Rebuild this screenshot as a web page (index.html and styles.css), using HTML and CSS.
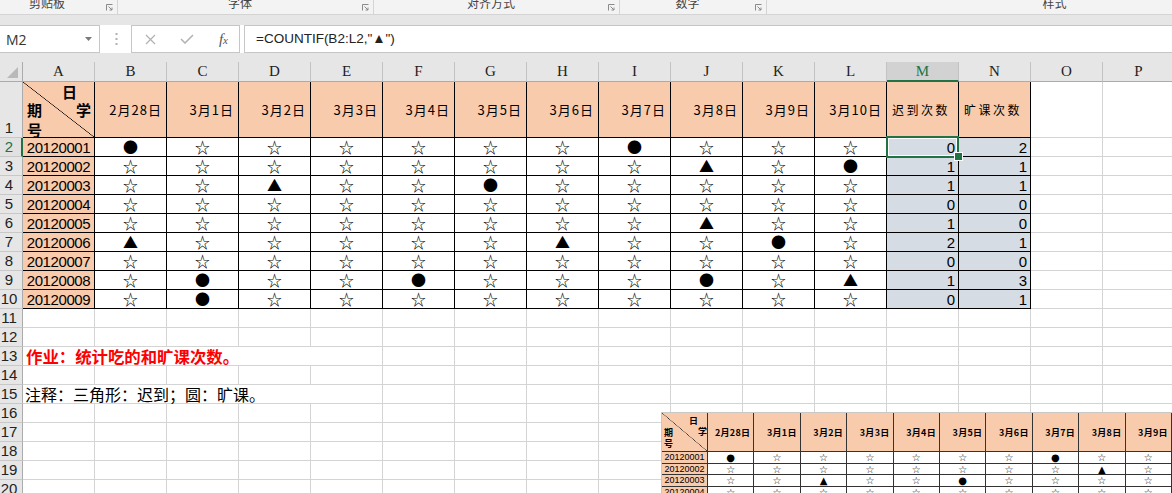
FILE: index.html
```html
<!DOCTYPE html>
<html lang="zh-CN">

<head>
    <meta charset="UTF-8">
    <meta name="viewport" content="width=device-width, initial-scale=1.0">
    <title>考勤统计</title>
    <link rel="stylesheet" href="styles.css">
</head>

<body>
    <!-- 功能区分组标题 -->
    <div class="ribbon">
        <div class="group g1"><span class="group-label">剪贴板</span><span class="launcher"><svg width="7" height="7" viewBox="0 0 7 7"><path d="M0.5 6.5V0.5H6.5" fill="none" stroke="#8a8a8a"/><path d="M2.5 2.5L6 6M6 3.5V6H3.5" fill="none" stroke="#8a8a8a"/></svg></span></div>
        <div class="group g2"><span class="group-label">字体</span><span class="launcher"><svg width="7" height="7" viewBox="0 0 7 7"><path d="M0.5 6.5V0.5H6.5" fill="none" stroke="#8a8a8a"/><path d="M2.5 2.5L6 6M6 3.5V6H3.5" fill="none" stroke="#8a8a8a"/></svg></span></div>
        <div class="group g3"><span class="group-label">对齐方式</span><span class="launcher"><svg width="7" height="7" viewBox="0 0 7 7"><path d="M0.5 6.5V0.5H6.5" fill="none" stroke="#8a8a8a"/><path d="M2.5 2.5L6 6M6 3.5V6H3.5" fill="none" stroke="#8a8a8a"/></svg></span></div>
        <div class="group g4"><span class="group-label">数字</span><span class="launcher"><svg width="7" height="7" viewBox="0 0 7 7"><path d="M0.5 6.5V0.5H6.5" fill="none" stroke="#8a8a8a"/><path d="M2.5 2.5L6 6M6 3.5V6H3.5" fill="none" stroke="#8a8a8a"/></svg></span></div>
        <div class="group g5"><span class="group-label">样式</span></div>
    </div>
    <div class="band"></div>

    <!-- 编辑栏 -->
    <div class="formula-bar">
        <div class="name-box">
            <span>M2</span>
            <svg class="drop" width="7" height="4" viewBox="0 0 7 4"><path d="M0 0H7L3.5 4Z" fill="#7a7a7a"/></svg>
        </div>
        <div class="grip">
            <svg width="3" height="12" viewBox="0 0 3 12"><rect x="0.5" y="0" width="2" height="2" fill="#b0b0b0"/><rect x="0.5" y="5" width="2" height="2" fill="#b0b0b0"/><rect x="0.5" y="10" width="2" height="2" fill="#b0b0b0"/></svg>
        </div>
        <div class="fx-box">
            <svg width="11" height="11" viewBox="0 0 11 11"><path d="M1 1L10 10M10 1L1 10" stroke="#b3b3b3" stroke-width="1.3"/></svg>
            <svg width="14" height="10" viewBox="0 0 14 10"><path d="M1 5L5 9L13 1" fill="none" stroke="#b3b3b3" stroke-width="1.6"/></svg>
            <span class="fx">f<small>x</small></span>
        </div>
        <div class="formula-input">=COUNTIF(B2:L2,"▲")</div>
    </div>
    <div class="band low"></div>

    <!-- 工作表 -->
    <div class="sheet" id="sheet"></div>

    <!-- 粘贴的图片 -->
    <div class="picture" id="picture"></div>

    <script>
        var dates = ['2月28日', '3月1日', '3月2日', '3月3日', '3月4日', '3月5日', '3月6日', '3月7日', '3月8日', '3月9日', '3月10日'];
        var students = [
            ['20120001', '●☆☆☆☆☆☆●☆☆☆'],
            ['20120002', '☆☆☆☆☆☆☆☆▲☆●'],
            ['20120003', '☆☆▲☆☆●☆☆☆☆☆'],
            ['20120004', '☆☆☆☆☆☆☆☆☆☆☆'],
            ['20120005', '☆☆☆☆☆☆☆☆▲☆☆'],
            ['20120006', '▲☆☆☆☆☆▲☆☆●☆'],
            ['20120007', '☆☆☆☆☆☆☆☆☆☆☆'],
            ['20120008', '☆●☆☆●☆☆☆●☆▲'],
            ['20120009', '☆●☆☆☆☆☆☆☆☆☆']
        ];
        var letters = 'ABCDEFGHIJKLMNOP'.split('');
        var diag = '<span class="d1">日</span><span class="d2">学</span><span class="d3">期</span><span class="d4">号</span>';

        function add(parent, cls, html) {
            var div = document.createElement('div');
            div.className = cls;
            div.innerHTML = html === undefined ? '' : html;
            parent.appendChild(div);
            return div;
        }

        // 表格主体
        var sheet = document.getElementById('sheet');
        function cell(cls, html) {
            return add(sheet, 'cell ' + cls, html);
        }
        function blanks(n) {
            for (var i = 0; i < n; i++) cell('');
        }

        cell('corner', '<svg width="13" height="13" viewBox="0 0 13 13"><path d="M12 1V12H1Z" fill="#b9b9b9"/></svg>');
        letters.forEach(function (l) {
            cell('col-head' + (l === 'M' ? ' active' : ''), l);
        });

        cell('row-head', '1');
        cell('t peach diag', diag);
        dates.forEach(function (d) {
            cell('t peach date', d);
        });
        cell('t peach title', '迟到次数');
        cell('t peach title', '旷课次数');
        blanks(2);

        students.forEach(function (s, i) {
            var r = i + 2;
            var late = 0;
            var absent = 0;
            cell('row-head' + (r === 2 ? ' active' : ''), r);
            cell('t peach id', s[0]);
            s[1].split('').forEach(function (c) {
                if (c === '▲') late++;
                if (c === '●') absent++;
                cell('t sym', c);
            });
            // 等同 COUNTIF(B:L,"▲") / COUNTIF(B:L,"●")
            cell('t slate num' + (r === 2 ? ' selected' : ''), late);
            cell('t slate num', absent);
            blanks(2);
        });

        for (var r = 11; r <= 20; r++) {
            cell('row-head', r);
            if (r === 13) {
                cell('note red span5', '作业：统计吃的和旷课次数。');
                blanks(11);
            } else if (r === 15) {
                cell('note span5', '注释：三角形：迟到；圆：旷课。');
                blanks(11);
            } else {
                blanks(16);
            }
        }

        // 右下角的表格截图
        var pic = document.getElementById('picture');
        add(pic, 'p-cell p-peach p-diag', diag);
        dates.forEach(function (d) {
            add(pic, 'p-cell p-peach p-date', d);
        });
        students.slice(0, 4).forEach(function (s) {
            add(pic, 'p-cell p-peach p-id', s[0]);
            s[1].split('').forEach(function (c) {
                add(pic, 'p-cell p-sym', c);
            });
        });
    </script>
</body>

</html>
```

FILE: styles.css
```css
* {
    padding: 0;
    margin: 0;
    box-sizing: border-box;
}

body {
    width: 1172px;
    height: 493px;
    overflow: hidden;
    position: relative;
    background: #ffffff;
    font-family: "Liberation Sans", "Noto Sans CJK SC", sans-serif;
    color: #000000;
}

/* 功能区 */
.ribbon {
    display: flex;
    height: 15px;
    background: #f3f3f3;
    border-bottom: 1px solid #d4d4d4;
    overflow: hidden;
    font-family: "Noto Sans CJK SC", sans-serif;
    font-size: 12px;
    color: #444444;
}

.group {
    display: flex;
    flex: none;
    height: 14px;
    border-right: 1px solid #d4d4d4;
}

.g1 {
    width: 118px;
}

.g2 {
    width: 256px;
}

.g3 {
    width: 246px;
}

.g4 {
    width: 147px;
}

.g5 {
    width: 576px;
}

.g1 .group-label {
    padding-right: 12px;
}

.group-label {
    flex: 1;
    text-align: center;
    line-height: 14px;
    margin-top: -4px;
    white-space: nowrap;
}

.launcher {
    width: 11px;
    padding-top: 4px;
}

.launcher svg {
    display: block;
}

.band {
    height: 10px;
    background: #e6e6e6;
}

.band.low {
    height: 9px;
}

/* 编辑栏 */
.formula-bar {
    display: flex;
    height: 28px;
    background: #ffffff;
}

.name-box {
    display: flex;
    align-items: center;
    justify-content: space-between;
    width: 100px;
    border: 1px solid #c6c6c6;
    border-left: none;
    padding: 0 7px 0 6px;
    font-family: "Open Sans", sans-serif;
    font-size: 14px;
    color: #333333;
}

.grip {
    width: 31px;
    display: flex;
    align-items: center;
    justify-content: center;
    padding-left: 2px;
}

.grip svg {
    display: block;
}

.fx-box {
    display: flex;
    align-items: center;
    justify-content: space-between;
    width: 109px;
    border: 1px solid #c6c6c6;
    padding: 0 11px 0 13px;
}

.fx {
    font-family: "Liberation Serif", serif;
    font-style: italic;
    font-size: 15px;
    color: #555555;
}

.fx small {
    font-size: 11px;
}

.formula-input {
    flex: 1;
    margin-left: 4px;
    border: 1px solid #c6c6c6;
    border-right: none;
    padding-left: 11px;
    line-height: 26px;
    font-size: 13.5px;
    color: #222222;
}

/* 工作表 */
.sheet {
    display: grid;
    grid-template-columns: 23px repeat(16, 72px);
    grid-template-rows: 20px 56px repeat(19, 19px);
    width: 1175px;
}

.cell {
    display: flex;
    align-items: center;
    border-right: 1px solid #d4d4d4;
    border-bottom: 1px solid #d4d4d4;
    font-size: 15px;
    white-space: nowrap;
}

.corner {
    background: #e6e6e6;
    border-right-color: #ababab;
    border-bottom-color: #ababab;
    align-items: flex-end;
    justify-content: flex-end;
    padding: 0 3px 2px 0;
}

.corner svg {
    display: block;
}

.col-head {
    justify-content: center;
    background: #e6e6e6;
    border-right-color: #c3c3c3;
    border-bottom-color: #ababab;
    font-family: "Liberation Serif", serif;
    font-size: 15px;
    color: #222222;
}

.col-head.active {
    background: #d2d2d2;
    color: #217346;
    border-bottom: 2px solid #217346;
}

.row-head {
    justify-content: center;
    align-items: flex-end;
    background: #e6e6e6;
    border-right-color: #ababab;
    border-bottom-color: #c8c8c8;
    padding-right: 4px;
    font-size: 15px;
    line-height: 18px;
    color: #222222;
}

.row-head.active {
    color: #217346;
    background: #e1e1e1;
    border-right: 2px solid #217346;
    padding-right: 3px;
}

.t {
    border-right-color: #000000;
    border-bottom-color: #000000;
}

.peach {
    background: #f8cbad;
}

.slate {
    background: #d6dce4;
}

.diag {
    position: relative;
    background-color: #f8cbad;
    background-image: linear-gradient(to top right, transparent calc(50% - 0.6px), #000000 50%, transparent calc(50% + 0.6px));
}

.diag span {
    position: absolute;
    font-family: "Noto Sans CJK SC", sans-serif;
    font-weight: bold;
    font-size: 15px;
    line-height: 15px;
}

.diag .d1 {
    left: 39px;
    top: 2px;
}

.diag .d2 {
    left: 53px;
    top: 20px;
}

.diag .d3 {
    left: 4px;
    top: 20px;
}

.diag .d4 {
    left: 4px;
    top: 40px;
}

.date {
    justify-content: flex-end;
    padding-right: 4px;
    font-family: "Noto Sans CJK SC", sans-serif;
    font-size: 13px;
    letter-spacing: 1px;
}

.title {
    padding-left: 5px;
    font-family: "Noto Sans CJK SC", sans-serif;
    font-size: 12px;
    letter-spacing: 2.5px;
}

.id {
    justify-content: center;
    letter-spacing: -0.4px;
}

.sym {
    justify-content: center;
    font-family: "Noto Sans CJK SC", sans-serif;
    font-size: 15px;
    line-height: 18px;
}

.num {
    justify-content: flex-end;
    padding-right: 3px;
}

.selected {
    position: relative;
    z-index: 2;
}

.selected::after {
    content: "";
    position: absolute;
    left: -1px;
    top: -2px;
    right: -1px;
    bottom: -2px;
    border: 2px solid #217346;
    box-shadow: inset 0 0 0 1px #ffffff;
}

.selected::before {
    content: "";
    position: absolute;
    right: -5px;
    bottom: -5px;
    width: 7px;
    height: 7px;
    background: #217346;
    border: 1px solid #ffffff;
    z-index: 3;
}

.span5 {
    grid-column: span 5;
}

.note {
    padding-left: 2px;
    font-family: "Noto Sans CJK SC", sans-serif;
    font-size: 16px;
}

.note.red {
    padding-left: 3px;
    color: #ff0000;
    font-weight: bold;
    font-size: 16.4px;
}

/* 图片 */
.picture {
    position: absolute;
    left: 661px;
    top: 412px;
    display: grid;
    grid-template-columns: 46px repeat(11, 46.4px);
    grid-template-rows: 39px repeat(4, 11.7px);
    background: #ffffff;
    border-top: 1px solid #c8c8c8;
    border-left: 1px solid #c8c8c8;
    font-size: 9px;
}

.p-cell {
    display: flex;
    align-items: center;
    justify-content: center;
    border-right: 1px solid #333333;
    border-bottom: 1px solid #333333;
    white-space: nowrap;
    overflow: hidden;
}

.p-peach {
    background: #f8cbad;
}

.p-diag {
    position: relative;
    background-image: linear-gradient(to top right, transparent calc(50% - 0.5px), #333333 50%, transparent calc(50% + 0.5px));
}

.p-diag span {
    position: absolute;
    font-family: "Noto Sans CJK SC", sans-serif;
    font-weight: bold;
    font-size: 9px;
    line-height: 9px;
}

.p-diag .d1 {
    left: 27px;
    top: 3px;
}

.p-diag .d2 {
    left: 36px;
    top: 14px;
}

.p-diag .d3 {
    left: 2px;
    top: 15px;
}

.p-diag .d4 {
    left: 2px;
    top: 26px;
}

.p-date {
    justify-content: flex-end;
    padding-right: 3px;
    font-family: "Noto Sans CJK SC", sans-serif;
    font-weight: bold;
    font-size: 9px;
    letter-spacing: 0.3px;
}

.p-id {
    font-size: 9px;
    line-height: 9px;
}

.p-sym {
    font-family: "DejaVu Sans", sans-serif;
    font-size: 10px;
    line-height: 9px;
}
```
